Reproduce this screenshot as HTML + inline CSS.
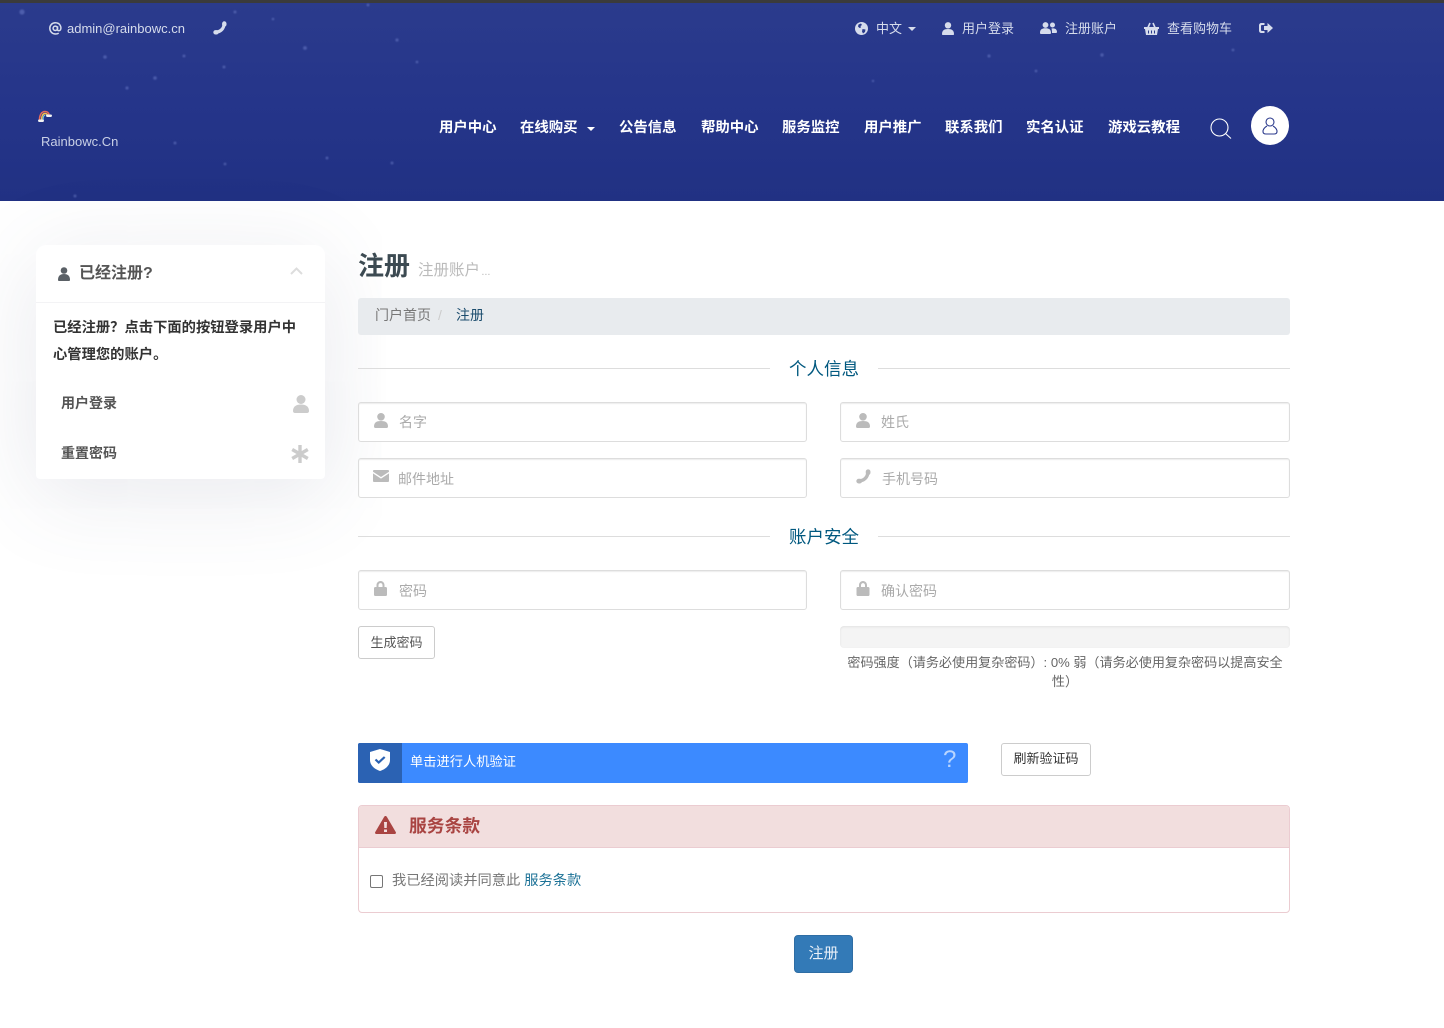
<!DOCTYPE html>
<html lang="zh"><head><meta charset="utf-8"><title>注册</title>
<style>
*{box-sizing:border-box}
html,body{margin:0;padding:0;background:#fff}
body{width:1444px;height:1028px;position:relative;overflow:hidden;font-family:"Liberation Sans","Noto Sans CJK SC",sans-serif;font-size:14px;color:#555}
.a{position:absolute;white-space:nowrap}
svg{position:absolute;display:block}
.hdr{position:absolute;left:0;top:0;width:1444px;height:201px;background:linear-gradient(180deg,#2b3b8c 0%,#25358a 50%,#213183 100%);border-top:3px solid #3b3b3b}
.top{color:#d6dcec;font-size:13px;line-height:18px;top:20px}
.nav{color:#fff;font-size:14.4px;font-weight:700;line-height:20px;top:118px}
.inp{position:absolute;height:40px;border:1px solid #ddd;border-radius:3px;background:#fff;box-shadow:inset 0 1px 1px rgba(0,0,0,.075)}
.ph{position:absolute;color:#aaa;font-size:14px;line-height:20px;white-space:nowrap}
.line{position:absolute;height:1px;background:#ddd;width:412px}
.sec{position:absolute;left:358px;width:932px;text-align:center;color:#00587f;font-size:17.500px;line-height:24px}
.btn{position:absolute;background:#fff;border:1px solid #ccc;border-radius:3px;text-align:center;white-space:nowrap}
</style></head><body>
<div class="hdr"></div>
<svg style="left:0;top:0;filter:blur(.7px)" width="1444" height="201" fill="#7f8fd8">
<g opacity=".42"><circle cx="22" cy="12" r="2.600"/><circle cx="105" cy="57" r="1.800"/><circle cx="155" cy="78" r="1.800"/><circle cx="127" cy="88" r="1.600"/><circle cx="184" cy="56" r="1.500"/><circle cx="224" cy="67" r="1.500"/><circle cx="305" cy="48" r="1.900"/><circle cx="397" cy="40" r="1.600"/><circle cx="235" cy="12" r="1.500"/><circle cx="273" cy="19" r="1.300"/><circle cx="417" cy="62" r="1.400"/><circle cx="175" cy="143" r="1.500"/><circle cx="225" cy="164" r="1.400"/><circle cx="75" cy="196" r="1.500"/><circle cx="327" cy="158" r="1.500"/><circle cx="392" cy="163" r="1.500"/><circle cx="368" cy="5" r="1.400"/><circle cx="989" cy="56" r="1.600"/><circle cx="1102" cy="55" r="1.700"/><circle cx="1036" cy="71" r="1.400"/><circle cx="1233" cy="50" r="1.400"/><circle cx="873" cy="81" r="1.200"/></g>
</svg>

<!-- top bar -->
<svg style="left:49px;top:22px" width="13" height="13" viewBox="0 0 13 13" fill="none" stroke="#d6dcec" stroke-width="1.500"><circle cx="6.300" cy="6.300" r="2.200"/><path d="M8.500 4.200V7.500c0 1.500 2.200 1.600 3 .2 1-2 .1-6.900-5.200-6.900C3 .8.800 3.300.8 6.300c0 3.200 2.500 5.700 5.700 5.700 1.300 0 2.300-.3 3.200-.9"/></svg>
<div class="a top" style="left:67px">admin@rainbowc.cn</div>
<svg style="left:213px;top:21px" width="14" height="14" viewBox="0 0 14 14" fill="none" stroke="#d6dcec" stroke-linecap="round"><path stroke-width="3.200" d="M11 3C11 7.500 7.500 11 3 11"/><path stroke-width="4.400" d="M11.300 2.500V3.500M2.500 11.300H3.500"/></svg>

<svg style="left:855px;top:22px" width="13" height="13" viewBox="0 0 13 13"><circle cx="6.500" cy="6.500" r="6.500" fill="#d6dcec"/><path fill="#2a3a8b" d="M3.500 2.500l2.500-1 1 1.500-1.500 1 .5 1.500-1.500.5-1.500-1.500zM7.500 7l3 .5-.5 2.500-2 1.500-1-2z"/></svg>
<div class="a top" style="left:876px">中文</div>
<svg style="left:908px;top:27px" width="8" height="4"><path fill="#d6dcec" d="M0 0h8L4 4z"/></svg>
<svg style="left:942px;top:22px" width="12" height="13" viewBox="0 0 12 13"><circle cx="6" cy="3.300" r="3.200" fill="#d6dcec"/><path fill="#d6dcec" d="M0 12.200C0 8.500 2 7 6 7s6 1.500 6 5.200c0 .5-.5.800-1 .800H1c-.5 0-1-.3-1-.8z"/></svg>
<div class="a top" style="left:962px">用户登录</div>
<svg style="left:1040px;top:22px" width="17" height="12" viewBox="0 0 17 12"><circle cx="5.500" cy="3" r="2.900" fill="#d6dcec"/><circle cx="12.500" cy="3" r="2.500" fill="#d6dcec"/><path fill="#d6dcec" d="M0 11c0-3.500 2-4.700 5.500-4.700S11 7.500 11 11c0 .6-.4 1-1 1H1c-.6 0-1-.4-1-1zM11.500 6.500c3.500-.5 5.500.8 5.500 3.500 0 .5-.4 1-1 1h-4c0-2-.2-3.200-.5-4.500z"/></svg>
<div class="a top" style="left:1065px">注册账户</div>
<svg style="left:1144px;top:22px" width="15" height="13" viewBox="0 0 15 13"><path fill="#d6dcec" d="M0 5h15v2h-1l-1 6H2L1 7H0z"/><path fill="none" stroke="#d6dcec" stroke-width="1.600" d="M4 5.500l2-4.500M11 5.500L9 1"/><path stroke="#2a3a8b" stroke-width="1" d="M4.500 8.500v3M7.500 8.500v3M10.500 8.500v3"/></svg>
<div class="a top" style="left:1167px">查看购物车</div>
<svg style="left:1259px;top:22px" width="14" height="12" viewBox="0 0 14 12"><path fill="#d6dcec" d="M14 6L8.500 1v3H5v4h3.500v3zM5.500 1H2.500C1 1 0 2 0 3.500v5C0 10 1 11 2.500 11h3V9H3c-.6 0-1-.4-1-1V4c0-.6.400-1 1-1h2.500z"/></svg>

<!-- logo -->
<svg style="left:38px;top:110px" width="14" height="12" viewBox="0 0 14 12"><path d="M1.500 10C1.500 5 3.500 1.500 7 1.500c2 0 3.500 1.200 4 3" fill="none" stroke="#e8695a" stroke-width="1.600"/><path d="M3.500 10C3.500 6 5 3.500 7 3.500c1.300 0 2.200.8 2.500 2" fill="none" stroke="#f3c14f" stroke-width="1.400"/><path d="M5 10C5 7 5.800 5.300 7.200 5.300" fill="none" stroke="#6fc3e8" stroke-width="1.200"/><rect x="0" y="9.500" width="6" height="2.500" rx="1.200" fill="#f2f2f2"/><rect x="8" y="4.500" width="6" height="2.500" rx="1.200" fill="#f2f2f2"/></svg>
<div class="a" style="left:41px;top:133px;color:#c9d0e6;font-size:13px;line-height:18px">Rainbowc.Cn</div>

<!-- nav -->
<div class="a nav" style="left:439px">用户中心</div>
<div class="a nav" style="left:520px">在线购买</div>
<svg style="left:587px;top:127px" width="8" height="4"><path fill="#fff" d="M0 0h8L4 4z"/></svg>
<div class="a nav" style="left:619px">公告信息</div>
<div class="a nav" style="left:701px">帮助中心</div>
<div class="a nav" style="left:782px">服务监控</div>
<div class="a nav" style="left:864px">用户推广</div>
<div class="a nav" style="left:945px">联系我们</div>
<div class="a nav" style="left:1026px">实名认证</div>
<div class="a nav" style="left:1108px">游戏云教程</div>
<svg style="left:1210px;top:118px" width="22" height="21" viewBox="0 0 22 21" fill="none" stroke="#fff" stroke-width="1.100"><circle cx="9.500" cy="9.500" r="8.500"/><path d="M15.500 15.500L21 20.500"/></svg>
<div class="a" style="left:1251px;top:106px;width:38px;height:39px;border-radius:50%;background:#fff"></div>
<svg style="left:1262px;top:117px" width="16" height="18" viewBox="0 0 16 18" fill="none" stroke="#2b3a8c" stroke-width="1.100"><circle cx="8" cy="5" r="4"/><path d="M5 9C2.500 10.500 1 12.500 1 14.500c0 1.500 1 2.500 3 2.500h8c2 0 3-1 3-2.500 0-2-1.500-4-4-5.500"/></svg>

<!-- sidebar -->
<div class="a" style="left:36px;top:245px;width:289px;height:234px;background:#fff;border-radius:10px 10px 4px 4px;box-shadow:0 15px 90px rgba(80,85,120,.14)"></div>
<div class="a" style="left:36px;top:302px;width:289px;height:1px;background:#f3f3f5"></div>
<svg style="left:58px;top:267px" width="12" height="14" viewBox="0 0 12 14"><circle cx="6" cy="3.500" r="3.300" fill="#5a6066"/><path fill="#5a6066" d="M0 13c0-4 2-6 6-6s6 2 6 6c0 .6-.4 1-1 1H1c-.6 0-1-.4-1-1z"/></svg>
<div class="a" style="left:79px;top:263px;font-size:16px;font-weight:700;line-height:22px;color:#555">已经注册?</div>
<svg style="left:290px;top:267px" width="13" height="8" viewBox="0 0 13 8"><path d="M1 7l5.500-5.500L12 7" fill="none" stroke="#ddd" stroke-width="2"/></svg>
<div class="a" style="left:53px;top:315px;width:250px;font-size:14.300px;font-weight:700;line-height:27px;color:#333;white-space:normal">已经注册？点击下面的按钮登录用户中心管理您的账户。</div>
<div class="a" style="left:61px;top:393px;font-size:14px;font-weight:700;line-height:20px;color:#555">用户登录</div>
<svg style="left:293px;top:395px" width="16" height="18" viewBox="0 0 16 18"><circle cx="8" cy="4.500" r="4.500" fill="#ccc"/><path fill="#ccc" d="M0 16c0-4.500 3-6.500 8-6.500s8 2 8 6.500c0 1-.6 2-2 2H2c-1.400 0-2-1-2-2z"/></svg>
<div class="a" style="left:61px;top:443px;font-size:14px;font-weight:700;line-height:20px;color:#555">重置密码</div>
<svg style="left:291px;top:445px" width="18" height="18" viewBox="0 0 18 18"><path stroke="#ccc" stroke-width="3.400" d="M9 0v18M1.200 4.500l15.600 9M16.800 4.500l-15.600 9"/></svg>

<!-- heading -->
<div class="a" style="left:358px;top:249px;font-size:26px;font-weight:700;line-height:34px;color:#3c4a52">注册</div>
<div class="a" style="left:418px;top:260px;font-size:15.500px;line-height:21px;color:#bbb">注册账户 <span style="font-size:11px;margin-left:-3px">...</span></div>
<div class="a" style="left:358px;top:298px;width:932px;height:37px;background:#e8ebee;border-radius:3px"></div>
<div class="a" style="left:375px;top:305px;line-height:20px;color:#777">门户首页</div>
<div class="a" style="left:438px;top:305px;line-height:20px;color:#ccc">/</div>
<div class="a" style="left:456px;top:305px;line-height:20px;color:#1c4d6e">注册</div>

<!-- personal -->
<div class="line" style="left:358px;top:368px"></div><div class="line" style="left:878px;top:368px"></div>
<div class="sec" style="top:357px">个人信息</div>
<div class="inp" style="left:358px;top:402px;width:449px"></div>
<svg style="left:374px;top:413px" width="14" height="15" viewBox="0 0 14 15"><circle cx="7" cy="3.800" r="3.800" fill="#bbb"/><path fill="#bbb" d="M0 13.500C0 9.500 2.500 8 7 8s7 1.500 7 5.500c0 1-.6 1.500-1.500 1.500h-11C.6 15 0 14.500 0 13.500z"/></svg>
<div class="ph" style="left:399px;top:412px">名字</div>
<div class="inp" style="left:840px;top:402px;width:450px"></div>
<svg style="left:856px;top:413px" width="14" height="15" viewBox="0 0 14 15"><circle cx="7" cy="3.800" r="3.800" fill="#bbb"/><path fill="#bbb" d="M0 13.500C0 9.500 2.500 8 7 8s7 1.500 7 5.500c0 1-.6 1.500-1.500 1.500h-11C.6 15 0 14.500 0 13.500z"/></svg>
<div class="ph" style="left:881px;top:412px">姓氏</div>
<div class="inp" style="left:358px;top:458px;width:449px"></div>
<svg style="left:373px;top:470px" width="16" height="12" viewBox="0 0 16 12"><path fill="#bbb" d="M1 0h14c.6 0 1 .4 1 1v.8L8 7 0 1.800V1c0-.6.400-1 1-1zM0 3.400L8 8.600l8-5.200V11c0 .6-.4 1-1 1H1c-.6 0-1-.4-1-1z"/></svg>
<div class="ph" style="left:398px;top:469px">邮件地址</div>
<div class="inp" style="left:840px;top:458px;width:450px"></div>
<svg style="left:856px;top:469px" width="15" height="15" viewBox="0 0 14 14" fill="none" stroke="#bbb" stroke-linecap="round"><path stroke-width="3.200" d="M11 3C11 7.500 7.500 11 3 11"/><path stroke-width="4.400" d="M11.300 2.500V3.500M2.500 11.300H3.500"/></svg>
<div class="ph" style="left:882px;top:469px">手机号码</div>

<!-- security -->
<div class="line" style="left:358px;top:536px"></div><div class="line" style="left:878px;top:536px"></div>
<div class="sec" style="top:525px">账户安全</div>
<div class="inp" style="left:358px;top:570px;width:449px"></div>
<svg style="left:374px;top:581px" width="13" height="15" viewBox="0 0 13 15"><path fill="#bbb" d="M2.500 6V4.200C2.500 1.800 4.200 0 6.500 0s4 1.800 4 4.200V6h1.200c.7 0 1.300.6 1.300 1.300v6.400c0 .7-.6 1.300-1.300 1.300H1.300C.6 15 0 14.400 0 13.700V7.300C0 6.600.6 6 1.300 6zm2 0h4V4.200c0-1.200-.8-2.100-2-2.100s-2 .9-2 2.100z"/></svg>
<div class="ph" style="left:399px;top:581px">密码</div>
<div class="inp" style="left:840px;top:570px;width:450px"></div>
<svg style="left:856px;top:581px" width="14" height="15" viewBox="0 0 13 15"><path fill="#bbb" d="M2.500 6V4.200C2.500 1.800 4.200 0 6.500 0s4 1.800 4 4.200V6h1.200c.7 0 1.300.6 1.300 1.300v6.400c0 .7-.6 1.300-1.300 1.300H1.300C.6 15 0 14.400 0 13.700V7.300C0 6.600.6 6 1.300 6zm2 0h4V4.200c0-1.200-.8-2.100-2-2.100s-2 .9-2 2.100z"/></svg>
<div class="ph" style="left:881px;top:581px">确认密码</div>
<div class="btn" style="left:358px;top:626px;width:77px;height:33px;font-size:13px;line-height:31px;color:#555">生成密码</div>
<div class="a" style="left:840px;top:626px;width:450px;height:22px;background:#f4f4f4;border-radius:4px;box-shadow:inset 0 1px 2px rgba(0,0,0,.08)"></div>
<div class="a" style="left:840px;top:653px;width:450px;font-size:13.080px;line-height:19px;color:#666;text-align:center;white-space:normal">密码强度（请务必使用复杂密码）: 0% 弱（请务必使用复杂密码以提高安全性）</div>

<!-- captcha -->
<div class="a" style="left:358px;top:743px;width:610px;height:40px;background:#3c8aff;border-radius:2px"></div>
<div class="a" style="left:358px;top:743px;width:44px;height:40px;background:#2b62b3;border-radius:2px 0 0 2px"></div>
<svg style="left:370px;top:749px" width="20" height="22" viewBox="0 0 20 22"><path fill="#fff" d="M10 0l10 3v8c0 5-4 9-10 11C4 20 0 16 0 11V3z"/><path d="M5.500 10.500l3.200 3 6-5.500" fill="none" stroke="#2b62b3" stroke-width="2.200"/></svg>
<div class="a" style="left:410px;top:752px;font-size:13.250px;line-height:20px;color:#fff">单击进行人机验证</div>
<div class="a" style="left:943px;top:746px;font-size:24px;line-height:28px;color:#b9d5ff">?</div>
<div class="btn" style="left:1001px;top:743px;width:90px;height:33px;font-size:13px;line-height:29px;color:#333">刷新验证码</div>

<!-- terms -->
<div class="a" style="left:358px;top:805px;width:932px;height:108px;border:1px solid #ebccd1;border-radius:4px;background:#fff"></div>
<div class="a" style="left:359px;top:806px;width:930px;height:42px;background:#f2dede;border-bottom:1px solid #ebccd1;border-radius:3px 3px 0 0"></div>
<svg style="left:375px;top:816px" width="21" height="18" viewBox="0 0 21 18"><path fill="#a94442" fill-rule="evenodd" d="M10.500 0c.6 0 1 .3 1.300.8l9 15.300c.5.900-.1 1.900-1.100 1.900H1.300C.3 18-.3 17 .2 16.100l9-15.300C9.500.3 9.900 0 10.500 0zM9 6l.3 6h2.400L12 6zm0 7.500V16h3v-2.500z"/></svg>
<div class="a" style="left:409px;top:814px;font-size:17.800px;font-weight:700;line-height:24px;color:#a94442">服务条款</div>
<div class="a" style="left:370px;top:875px;width:13px;height:13px;border:1px solid #767676;border-radius:2px;background:#fff"></div>
<div class="a" style="left:392px;top:871px;font-size:14.250px;line-height:20px;color:#777">我已经阅读并同意此 <span style="color:#1b7196">服务条款</span></div>
<div class="a" style="left:794px;top:935px;width:59px;height:38px;background:#337ab7;border:1px solid #2e6da4;border-radius:4px;color:#e8f0f8;text-align:center;font-size:15px;line-height:36px">注册</div>
</body></html>
